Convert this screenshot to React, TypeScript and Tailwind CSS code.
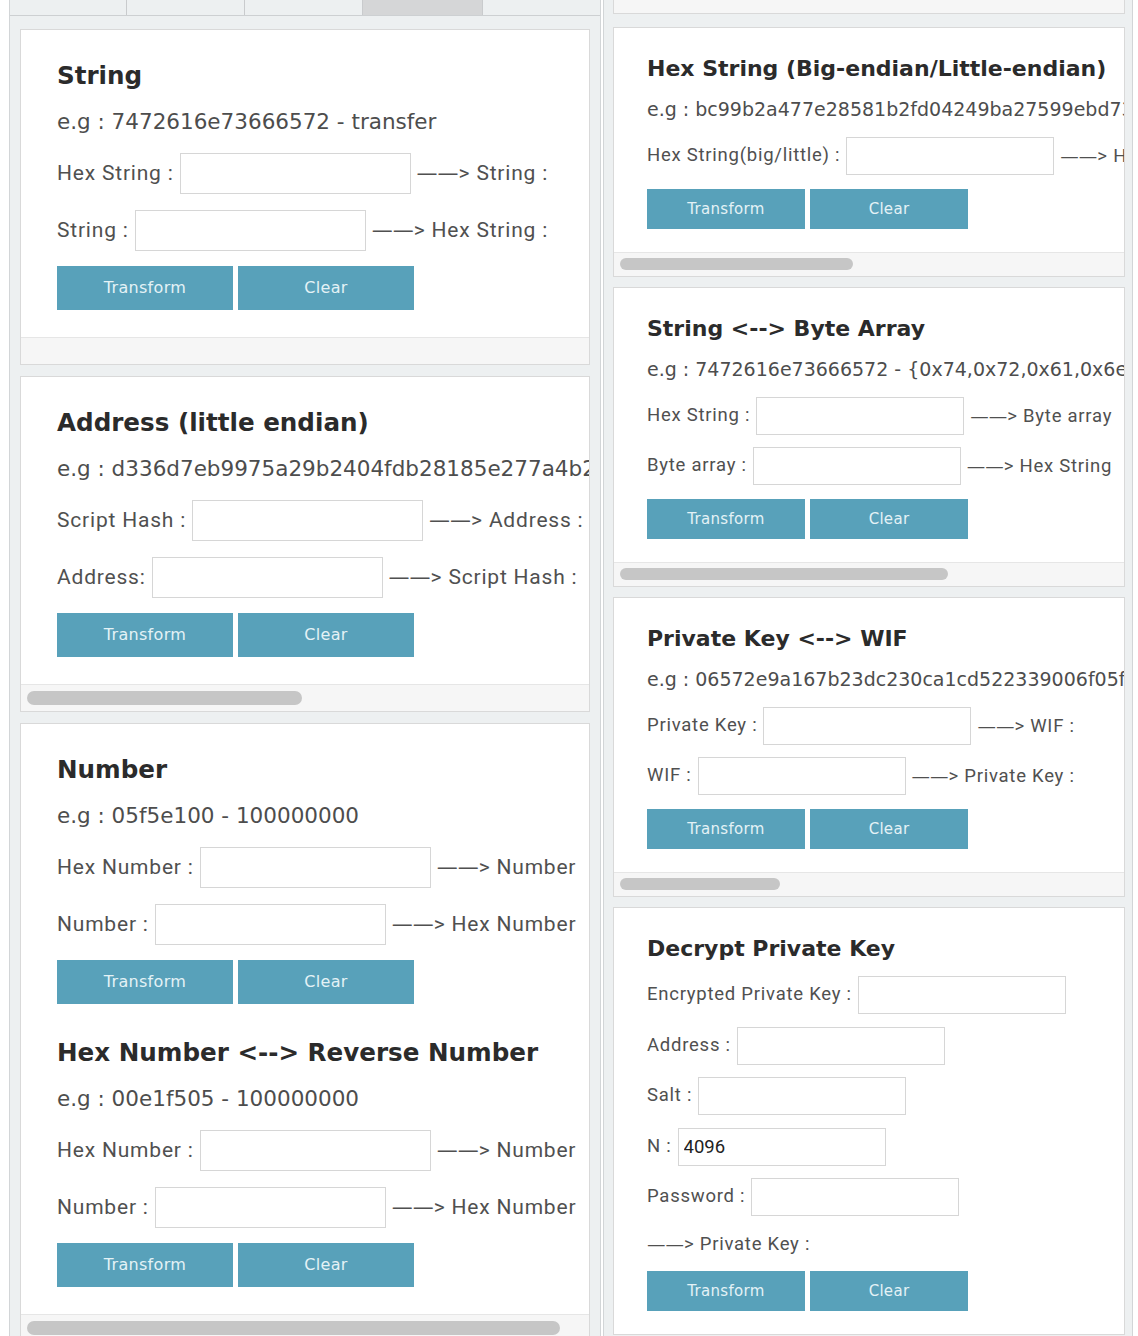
import React from 'react';

type Size = 'lg' | 'sm';

// class sets for the two columns (left one is drawn a little larger)
const S = {
  lg: {
    body: 'pl-[36px] pt-[31px] pb-[27px]',
    title: 'text-[24.6px] leading-[29px]',
    eg: 'mt-[18px] text-[21.5px] leading-[28px]',
    text: 'text-[21px] tracking-[0.8px]',
    input: 'h-[41px] w-[231px]',
    firstRow: 'mt-[17px]',
    nextRow: 'mt-[16px]',
    btns: 'mt-[15px]',
    btn: 'h-[44px] w-[176px] text-[16px]',
    footer: 'h-[27px]',
    thumb: 'mt-[6px] h-[14px]',
  },
  sm: {
    body: 'pl-[33px] pt-[28px] pb-[23px]',
    title: 'text-[22px] leading-[25px]',
    eg: 'mt-[16px] text-[19px] leading-[25px]',
    text: 'text-[18.5px] tracking-[0.75px]',
    input: 'h-[38px] w-[208px]',
    firstRow: 'mt-[15px]',
    nextRow: 'mt-[12px]',
    btns: 'mt-[14px]',
    btn: 'h-[40px] w-[158px] text-[15px]',
    footer: 'h-[24px]',
    thumb: 'mt-[5px] h-[12px]',
  },
};

const verdana = "font-['DejaVu_Sans',Verdana,sans-serif]";
const roboto = "font-['Roboto',Arial,sans-serif]";

const Title = ({ size, children, className = '' }: { size: Size; children: React.ReactNode; className?: string }) => (
  <h2 className={`${verdana} ${S[size].title} font-bold text-[#2b2b2b] whitespace-nowrap ${className}`}>{children}</h2>
);

const Example = ({ size, children }: { size: Size; children: React.ReactNode }) => (
  <p className={`${verdana} ${S[size].eg} text-[#4d4d4d] whitespace-nowrap`}>{children}</p>
);

// "——>" with a continuous line
const Arrow = ({ children }: { children?: React.ReactNode }) => (
  <span>
    <span className="font-['DejaVu_Sans',sans-serif] tracking-normal">——</span>&gt;{children ? ' ' : ''}
    {children}
  </span>
);

const Row = ({
  size,
  label,
  arrow,
  value,
  mt,
  first,
}: {
  size: Size;
  label: string;
  arrow?: string;
  value?: string;
  mt?: string;
  first?: boolean;
}) => (
  <div
    className={`flex items-center whitespace-nowrap ${roboto} ${S[size].text} text-[#505050] ${
      mt ?? (first ? S[size].firstRow : S[size].nextRow)
    }`}
  >
    <span>{label}</span>
    <input
      readOnly
      value={value ?? ''}
      className={`ml-[6px] shrink-0 border border-[#d6d6d6] bg-white px-[5px] tracking-normal text-[#222] outline-none ${S[size].input}`}
    />
    {arrow && (
      <span className="ml-[6px]">
        <Arrow>{arrow}</Arrow>
      </span>
    )}
  </div>
);

const Buttons = ({ size, className = '' }: { size: Size; className?: string }) => (
  <div className={`flex gap-[5px] ${className || S[size].btns}`}>
    {['Transform', 'Clear'].map((t) => (
      <button
        key={t}
        className={`${verdana} ${S[size].btn} bg-[#58a1ba] text-[#e4f2f6] tracking-[0.3px]`}
      >
        {t}
      </button>
    ))}
  </div>
);

const Card = ({
  size,
  thumb,
  children,
}: {
  size: Size;
  thumb?: number | null; // undefined = no scroll footer, null = empty track
  children: React.ReactNode;
}) => (
  <div className="border border-[#d9d9d9] bg-white overflow-hidden shrink-0">
    <div className={`${S[size].body} overflow-hidden`}>{children}</div>
    {thumb !== undefined && (
      <div className={`${S[size].footer} border-t border-[#e6e6e6] bg-[#f6f6f6]`}>
        {thumb !== null && (
          <div className={`ml-[6px] rounded-full bg-[#c6c6c6] ${S[size].thumb}`} style={{ width: thumb }} />
        )}
      </div>
    )}
  </div>
);

export default function App() {
  return (
    <div className="flex h-[1336px] w-[1138px] items-start overflow-hidden bg-white">
      {/* left column */}
      <div className="ml-[9px] flex h-full w-[592px] flex-col border-x border-[#d2d5d7] bg-[#edf0f1]">
        <div className="flex h-[16px] shrink-0 border-b border-[#cdd0d2]">
          <div className="w-[117px] border-r border-[#c9cbcd]" />
          <div className="w-[118px] border-r border-[#c9cbcd]" />
          <div className="w-[118px] border-r border-[#c9cbcd]" />
          <div className="w-[120px] border-r border-[#c9cbcd] bg-[#d5d6d7]" />
          <div className="flex-1" />
        </div>
        <div className="mt-[13px] flex flex-col gap-[11px] px-[10px]">
          <Card size="lg" thumb={null}>
            <Title size="lg">String</Title>
            <Example size="lg">e.g : 7472616e73666572 - transfer</Example>
            <Row size="lg" first label="Hex String :" arrow="String :" />
            <Row size="lg" label="String :" arrow="Hex String :" />
            <Buttons size="lg" />
          </Card>
          <Card size="lg" thumb={275}>
            <Title size="lg">Address (little endian)</Title>
            <Example size="lg">e.g : d336d7eb9975a29b2404fdb28185e277a4b2b6a4</Example>
            <Row size="lg" first label="Script Hash :" arrow="Address :" />
            <Row size="lg" label="Address:" arrow="Script Hash :" />
            <Buttons size="lg" />
          </Card>
          <Card size="lg" thumb={533}>
            <Title size="lg">Number</Title>
            <Example size="lg">e.g : 05f5e100 - 100000000</Example>
            <Row size="lg" first label="Hex Number :" arrow="Number" />
            <Row size="lg" label="Number :" arrow="Hex Number" />
            <Buttons size="lg" />
            <Title size="lg" className="mt-[34px]">Hex Number &lt;--&gt; Reverse Number</Title>
            <Example size="lg">e.g : 00e1f505 - 100000000</Example>
            <Row size="lg" first label="Hex Number :" arrow="Number" />
            <Row size="lg" label="Number :" arrow="Hex Number" />
            <Buttons size="lg" />
          </Card>
        </div>
      </div>

      {/* right column */}
      <div className="ml-[2px] flex h-full w-[530px] flex-col border-x border-[#d2d5d7] bg-[#edf0f1] pl-[9px] pr-[7px]">
        <div className="h-[14px] shrink-0 border-x border-b border-[#d9d9d9] bg-[#f6f6f6]" />
        <div className="mt-[13px] flex flex-col gap-[10px]">
          <Card size="sm" thumb={233}>
            <Title size="sm">Hex String (Big-endian/Little-endian)</Title>
            <Example size="sm">e.g : bc99b2a477e28581b2fd04249ba27599ebd736d3 - d336d7eb</Example>
            <Row size="sm" first label="Hex String(big/little) :" arrow="Hex String(little/big) :" />
            <Buttons size="sm" />
          </Card>
          <Card size="sm" thumb={328}>
            <Title size="sm">String &lt;--&gt; Byte Array</Title>
            <Example size="sm">e.g : 7472616e73666572 - {'{'}0x74,0x72,0x61,0x6e,0x73,0x66,0x65,0x72{'}'}</Example>
            <Row size="sm" first label="Hex String :" arrow="Byte array" />
            <Row size="sm" label="Byte array :" arrow="Hex String" />
            <Buttons size="sm" />
          </Card>
          <Card size="sm" thumb={160}>
            <Title size="sm">Private Key &lt;--&gt; WIF</Title>
            <Example size="sm">e.g : 06572e9a167b23dc230ca1cd522339006f05f8e1 - KwNf</Example>
            <Row size="sm" first label="Private Key :" arrow="WIF :" />
            <Row size="sm" label="WIF :" arrow="Private Key :" />
            <Buttons size="sm" />
          </Card>
          <Card size="sm">
            <Title size="sm">Decrypt Private Key</Title>
            <Row size="sm" mt="mt-[15px]" label="Encrypted Private Key :" />
            <Row size="sm" mt="mt-[12.5px]" label="Address :" />
            <Row size="sm" mt="mt-[12.5px]" label="Salt :" />
            <Row size="sm" mt="mt-[12.5px]" label="N :" value="4096" />
            <Row size="sm" mt="mt-[12.5px]" label="Password :" />
            <p className={`${roboto} ${S.sm.text} mt-[14.5px] leading-[25px] text-[#505050]`}>
              <Arrow>Private Key :</Arrow>
            </p>
            <Buttons size="sm" className="mt-[14.5px]" />
          </Card>
        </div>
      </div>
    </div>
  );
}
